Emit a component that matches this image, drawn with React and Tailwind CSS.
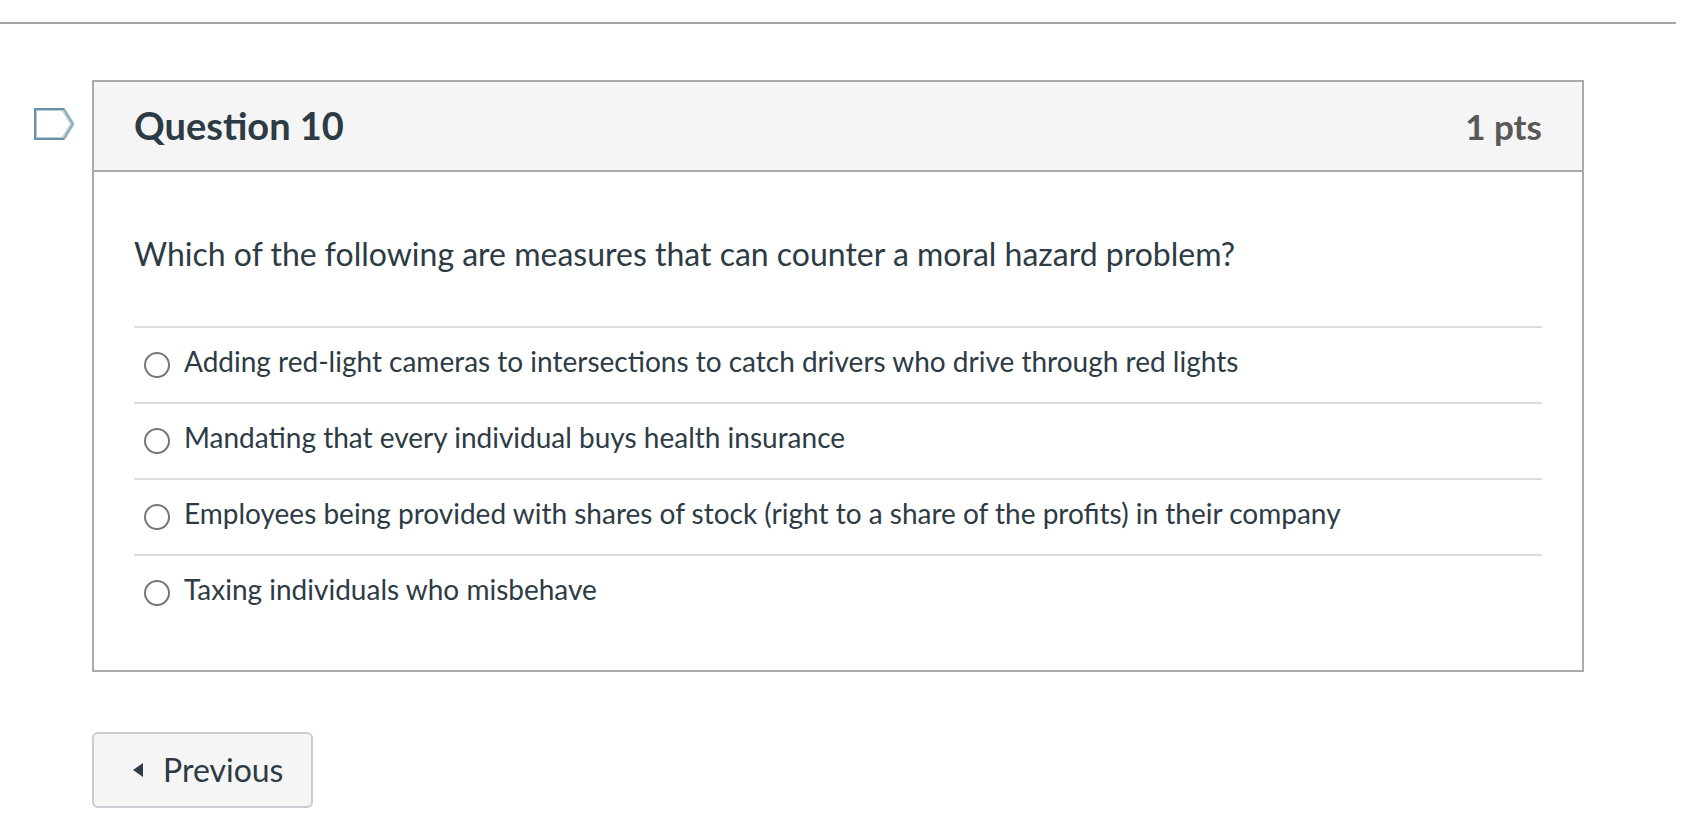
import { useState } from "react";

const answers = [
  "Adding red-light cameras to intersections to catch drivers who drive through red lights",
  "Mandating that every individual buys health insurance",
  "Employees being provided with shares of stock (right to a share of the profits) in their company",
  "Taxing individuals who misbehave",
];

function FlagButton({ flagged, onClick }) {
  return (
    <button
      type="button"
      aria-label="Flag question"
      aria-pressed={flagged}
      onClick={onClick}
      className="mt-7 h-8 w-10 shrink-0"
    >
      <svg viewBox="0 0 40 32" className="h-8 w-10" fill={flagged ? "#f5d76e" : "none"}>
        <path d="M29 1 L38.5 16 L29 31" stroke="#b9cbd7" strokeWidth="4" />
        <path d="M30 1 L39 16 L30 31" stroke="#8fabbe" strokeWidth="2" />
        <path d="M30 2.5 H2.5 V29.5 H30" stroke="#b9cbd7" strokeWidth="1" />
        <path d="M30 1 H1 V31 H30" stroke="#6a8fa8" strokeWidth="2" />
      </svg>
    </button>
  );
}

function App() {
  const [flagged, setFlagged] = useState(false);
  const [selected, setSelected] = useState(null);

  return (
    <div className="min-h-screen bg-white pt-[22px] font-['Lato',sans-serif] text-[#2d3b45]">
      <hr className="mr-4 border-t-2 border-[#a5a5a5]" />

      <main className="mt-14 pr-[108px] pl-[34px]">
        <div className="flex items-start gap-[18px]">
          <FlagButton flagged={flagged} onClick={() => setFlagged(!flagged)} />

          <section className="flex-1 border-2 border-[#aaaaaa]">
            <header className="flex items-baseline justify-between border-b-2 border-[#aaaaaa] bg-[#f5f5f5] px-10 pt-5 pb-[21px] leading-[46px] font-bold">
              <h1 className="text-[38px]">Question 10</h1>
              <span className="text-[35px] text-[#595959]">1 pts</span>
            </header>

            <fieldset aria-labelledby="question-text" className="px-10 pt-[58px] pb-10">
              <p id="question-text" className="mb-12 text-[32px] leading-[48px]">
                Which of the following are measures that can counter a moral hazard problem?
              </p>
              {answers.map((answer, i) => (
                <label
                  key={i}
                  className="flex items-center gap-[14px] border-t-2 border-[#dddddd] px-[10px] py-4"
                >
                  <input
                    type="radio"
                    name="answer"
                    checked={selected === i}
                    onChange={() => setSelected(i)}
                    className="size-[26px] shrink-0 appearance-none rounded-full border-2 border-[#767676] bg-white checked:border-8 checked:border-[#0075ff]"
                  />
                  <span className="pb-2 text-[28px] leading-[34px]">{answer}</span>
                </label>
              ))}
            </fieldset>
          </section>
        </div>

        <button
          type="button"
          className="mt-[60px] ml-[58px] flex items-center gap-5 rounded-md border-2 border-[#c7cdd1] bg-[#f5f5f5] py-3 pr-7 pl-[39px] text-[32px] leading-[48px]"
        >
          <svg viewBox="0 0 10 14" className="h-[14px] w-[10px]" fill="#2d3b45">
            <path d="M10 0 V14 L0 7 Z" />
          </svg>
          Previous
        </button>
      </main>
    </div>
  );
}

export default App;
